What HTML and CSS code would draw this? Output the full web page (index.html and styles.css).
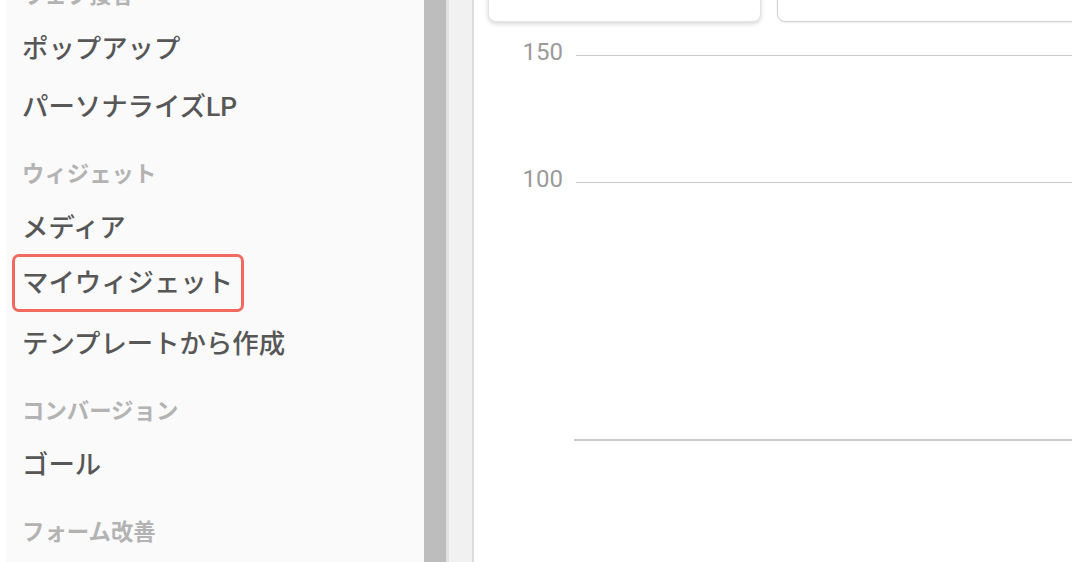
FILE: index.html
```html
<!DOCTYPE html>
<html lang="ja">
<head>
<meta charset="utf-8">
<title>Widgets</title>
<link rel="stylesheet" href="styles.css">
</head>
<body>
<div class="app">
  <nav class="sidebar">
    <ul class="menu">
      <li class="menu-head">ウェブ接客</li>
      <li class="menu-item">ポップアップ</li>
      <li class="menu-item">パーソナライズLP</li>
      <li class="menu-head">ウィジェット</li>
      <li class="menu-item">メディア</li>
      <li class="menu-item"><span class="highlight">マイウィジェット</span></li>
      <li class="menu-item">テンプレートから作成</li>
      <li class="menu-head">コンバージョン</li>
      <li class="menu-item">ゴール</li>
      <li class="menu-head">フォーム改善</li>
    </ul>
  </nav>
  <div class="scrollbar">
    <div class="thumb"></div>
    <div class="track"></div>
  </div>
  <main class="main">
    <div class="cards">
      <div class="card card-primary"></div>
      <div class="card card-secondary"></div>
    </div>
    <div class="chart">
      <div class="grid-row row-150"><span class="tick">150</span><span class="gridline"></span></div>
      <div class="grid-row row-100"><span class="tick">100</span><span class="gridline"></span></div>
      <div class="axis-row"><span class="axis-line"></span></div>
    </div>
  </main>
</div>
</body>
</html>
```

FILE: styles.css
```css
* { box-sizing: border-box; }
html, body { margin: 0; padding: 0; }
body {
  background: #ffffff;
  font-family: Roboto, "Noto Sans CJK JP", sans-serif;
  overflow: hidden;
}
.app {
  display: flex;
  height: 562px;
  overflow: hidden;
}
.sidebar {
  width: 418px;
  margin-left: 6px;
  background: #fafafa;
  flex: none;
  overflow: hidden;
}
.menu {
  list-style: none;
  margin: -27px 0 0 0;
  padding: 0 0 0 16px;
}
.menu-head {
  height: 44px;
  line-height: 44px;
  margin-top: 19px;
  font-size: 22.4px;
  font-weight: 700;
  color: #b3b3b3;
  white-space: nowrap;
}
.menu-head:first-child { margin-top: 0; }
.menu-item {
  height: 58px;
  display: flex;
  align-items: center;
  font-size: 26.4px;
  font-weight: 500;
  color: #575757;
  white-space: nowrap;
}
.highlight {
  display: inline-block;
  height: 58px;
  line-height: 52px;
  margin-left: -10px;
  padding: 0 8px 0 7px;
  border: 3px solid #f26a5f;
  border-radius: 7px;
}
.scrollbar {
  width: 50px;
  flex: none;
  display: flex;
}
.thumb {
  width: 22px;
  background: #bdbdbd;
}
.track {
  flex: 1;
  background: #f1f1f1;
  border-left: 3px solid #e2e2e2;
  border-right: 2px solid #dcdcdc;
}
.main {
  flex: 1;
  display: flex;
  flex-direction: column;
  padding-left: 14px;
  min-width: 0;
}
.cards {
  display: flex;
  gap: 16px;
  margin-top: -58px;
  height: 80px;
  flex: none;
}
.card {
  flex: none;
  height: 80px;
  border-radius: 8px;
  background: #ffffff;
}
.card-primary {
  width: 273px;
  border: 1px solid #e4e4e4;
  box-shadow: 0 2px 4px rgba(0, 0, 0, 0.16);
}
.card-secondary {
  width: 320px;
  border: 1px solid #d2d2d2;
  box-shadow: 0 1px 2px rgba(0, 0, 0, 0.08);
}
.chart {
  margin-top: 33px;
  margin-left: -14px;
  display: flex;
  flex-direction: column;
}
.grid-row {
  display: flex;
  align-items: flex-start;
}
.row-150 { height: 127px; }
.row-100 { height: 257px; }
.tick {
  width: 89px;
  flex: none;
  text-align: right;
  font-family: Roboto, sans-serif;
  font-size: 24px;
  line-height: 28px;
  height: 28px;
  margin-top: -17px;
  color: #9b9b9b;
}
.gridline {
  flex: 1;
  margin-left: 13px;
  border-top: 1px solid #cacaca;
}
.axis-row {
  display: flex;
  padding-left: 100px;
}
.axis-line {
  flex: 1;
  border-top: 2px solid #cbcbcb;
}
```
